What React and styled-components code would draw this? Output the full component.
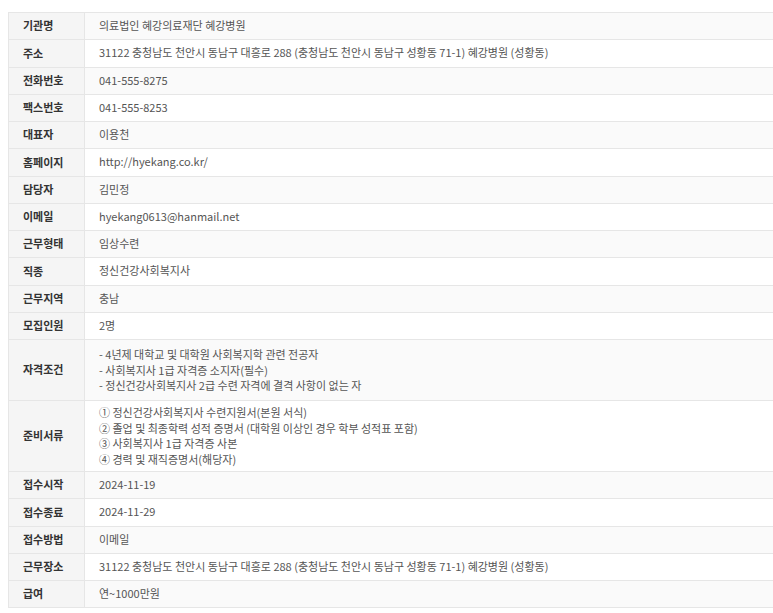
import React from "react";
import styled, { createGlobalStyle } from "styled-components";

const GlobalStyle = createGlobalStyle`
  body {
    margin: 0;
    background: #fff;
    font-family: "Noto Sans CJK KR", "Noto Sans", sans-serif;
  }
`;

const rows = [
  { label: "기관명", value: ["의료법인 혜강의료재단 혜강병원"] },
  { label: "주소", value: ["31122 충청남도 천안시 동남구 대흥로 288 (충청남도 천안시 동남구 성황동 71-1) 혜강병원 (성황동)"] },
  { label: "전화번호", value: ["041-555-8275"] },
  { label: "팩스번호", value: ["041-555-8253"] },
  { label: "대표자", value: ["이용천"] },
  { label: "홈페이지", value: ["http://hyekang.co.kr/"] },
  { label: "담당자", value: ["김민정"] },
  { label: "이메일", value: ["hyekang0613@hanmail.net"] },
  { label: "근무형태", value: ["임상수련"] },
  { label: "직종", value: ["정신건강사회복지사"] },
  { label: "근무지역", value: ["충남"] },
  { label: "모집인원", value: ["2명"] },
  {
    label: "자격조건",
    pad: "7px 14px 6.5px",
    value: [
      "- 4년제 대학교 및 대학원 사회복지학 관련 전공자",
      "- 사회복지사 1급 자격증 소지자(필수)",
      "- 정신건강사회복지사 2급 수련 자격에 결격 사항이 없는 자",
    ],
  },
  {
    label: "준비서류",
    pad: "4px 14px 4px",
    value: [
      "① 정신건강사회복지사 수련지원서(본원 서식)",
      "② 졸업 및 최종학력 성적 증명서 (대학원 이상인 경우 학부 성적표 포함)",
      "③ 사회복지사 1급 자격증 사본",
      "④ 경력 및 재직증명서(해당자)",
    ],
  },
  { label: "접수시작", value: ["2024-11-19"] },
  { label: "접수종료", value: ["2024-11-29"] },
  { label: "접수방법", value: ["이메일"] },
  { label: "근무장소", value: ["31122 충청남도 천안시 동남구 대흥로 288 (충청남도 천안시 동남구 성황동 71-1) 혜강병원 (성황동)"] },
  { label: "급여", value: ["연~1000만원"] },
];

const Page = styled.div`
  padding: 12px 0 5px 8px;
`;

const Table = styled.div`
  width: 764px;
  border: 1px solid #e6e6e6;
  border-bottom: none;
  font-size: 11px;
`;

const Row = styled.div`
  display: grid;
  grid-template-columns: 76px 1fr;
  border-bottom: 1px solid #e6e6e6;
  background: ${(p) => (p.$alt ? "#fafafa" : "#fff")};
`;

const Label = styled.div`
  display: flex;
  align-items: center;
  padding: 0 14px;
  background: #f5f5f5;
  border-right: 1px solid #e6e6e6;
  color: #333;
  font-weight: 700;
  line-height: 15.5px;
`;

const Value = styled.div`
  padding: ${(p) => p.$pad || "5px 14px 5.75px"};
  color: #555;
  line-height: 15.5px;
`;

const Line = styled.div`
  white-space: nowrap;
`;

export default function App() {
  return (
    <Page>
      <GlobalStyle />
      <Table>
        {rows.map((r, i) => (
          <Row key={r.label} $alt={i % 2 === 0}>
            <Label>{r.label}</Label>
            <Value $pad={r.pad}>
              {r.value.map((t) => (
                <Line key={t}>{t}</Line>
              ))}
            </Value>
          </Row>
        ))}
      </Table>
    </Page>
  );
}
